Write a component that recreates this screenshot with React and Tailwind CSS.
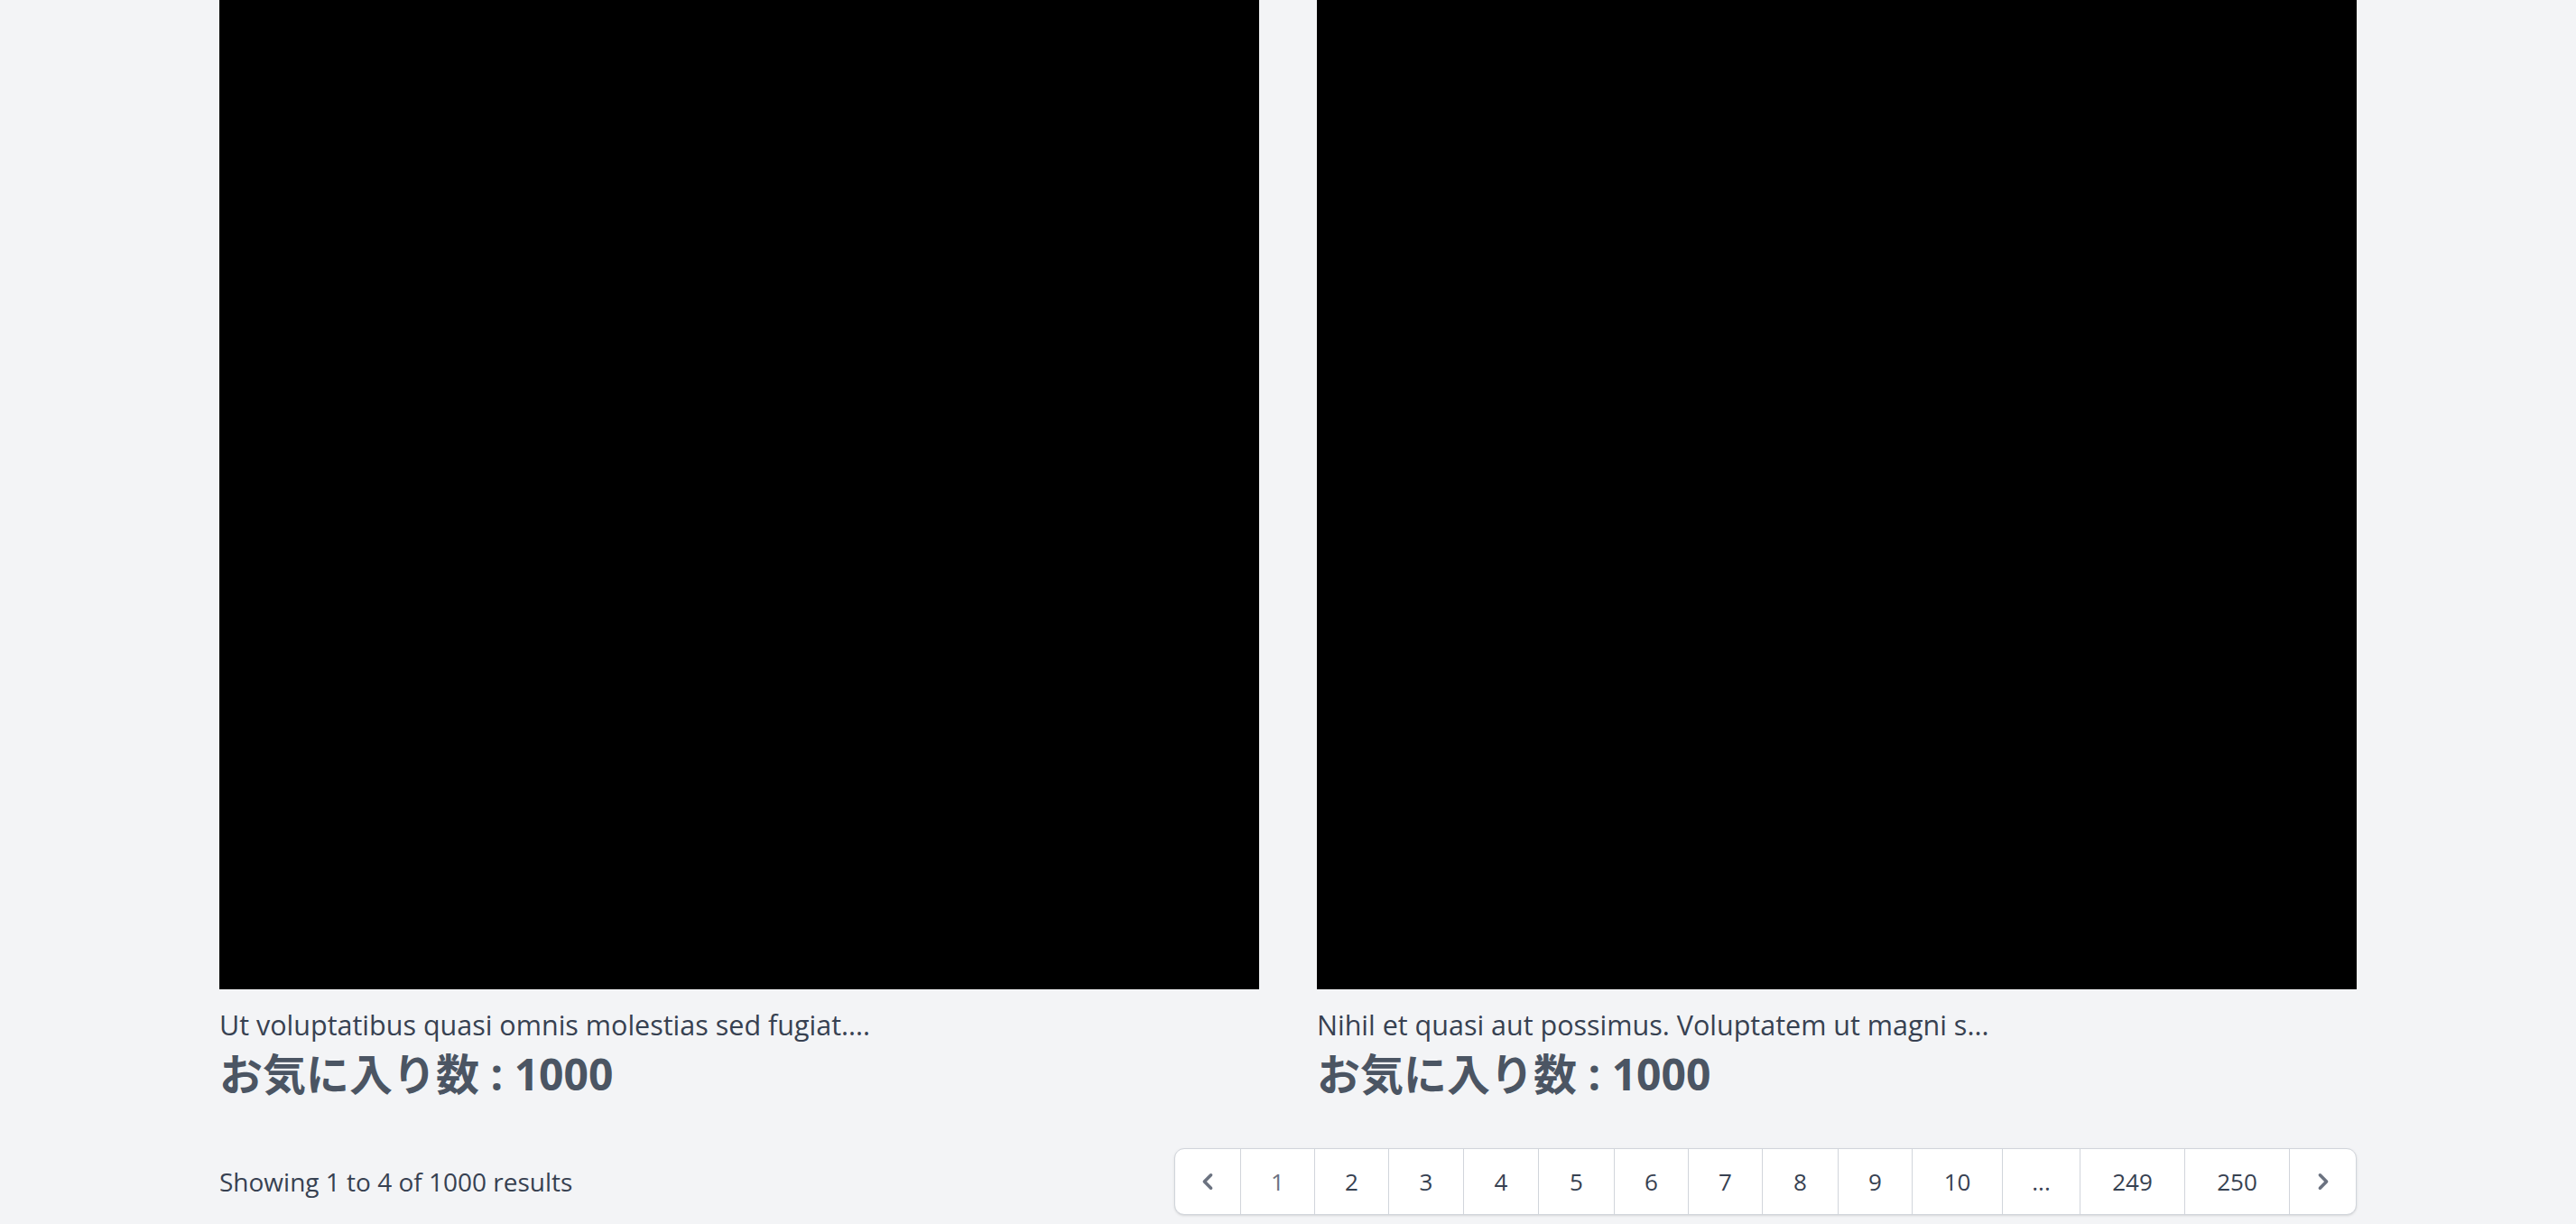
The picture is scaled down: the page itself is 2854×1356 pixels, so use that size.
import React from 'react';

const posts = [
  { id: 1, excerpt: 'Ut voluptatibus quasi omnis molestias sed fugiat....', favorites: 1000 },
  { id: 2, excerpt: 'Nihil et quasi aut possimus. Voluptatem ut magni s...', favorites: 1000 },
];

const pages = [
  { label: '1', w: 'w-[82px]', current: true },
  { label: '2', w: 'w-[82px]' },
  { label: '3', w: 'w-[83px]' },
  { label: '4', w: 'w-[83px]' },
  { label: '5', w: 'w-[84px]' },
  { label: '6', w: 'w-[82px]' },
  { label: '7', w: 'w-[82px]' },
  { label: '8', w: 'w-[84px]' },
  { label: '9', w: 'w-[82px]' },
  { label: '10', w: 'w-[100px]' },
  { label: '...', w: 'w-[86px]' },
  { label: '249', w: 'w-[116px]' },
  { label: '250', w: 'w-[116px]' },
];

function Chevron({ dir }) {
  return (
    <svg viewBox="0 0 20 20" fill="currentColor" className="w-[36px] h-[36px]">
      {dir === 'left' ? (
        <path fillRule="evenodd" d="M12.707 5.293a1 1 0 010 1.414L9.414 10l3.293 3.293a1 1 0 01-1.414 1.414l-4-4a1 1 0 010-1.414l4-4a1 1 0 011.414 0z" clipRule="evenodd" />
      ) : (
        <path fillRule="evenodd" d="M7.293 14.707a1 1 0 010-1.414L10.586 10 7.293 6.707a1 1 0 011.414-1.414l4 4a1 1 0 010 1.414l-4 4a1 1 0 01-1.414 0z" clipRule="evenodd" />
      )}
    </svg>
  );
}

function PostCard({ post }) {
  return (
    <div className="flex flex-col">
      <div className="h-[1096px] bg-black" />
      <p className="mt-[16px] text-[30.5px] leading-[46px] text-[#374151]">{post.excerpt}</p>
      <h3 className="text-[48px] leading-[64px] font-bold text-[#4b5563]">
        お気に入り数 : {post.favorites}
      </h3>
    </div>
  );
}

function Pagination() {
  return (
    <nav className="flex h-[74px] bg-white border border-[#d1d5db] rounded-[11px] shadow-sm overflow-hidden text-[26px] text-[#374151]">
      <span className="w-[73px] flex items-center justify-center text-[#6b7280] border-r border-[#d1d5db]">
        <Chevron dir="left" />
      </span>
      {pages.map((p) => (
        <span
          key={p.label}
          className={`${p.w} flex items-center justify-center border-r border-[#d1d5db] ${
            p.current ? 'text-[#6b7280]' : ''
          }`}
        >
          {p.label}
        </span>
      ))}
      <span className="w-[73px] flex items-center justify-center text-[#6b7280]">
        <Chevron dir="right" />
      </span>
    </nav>
  );
}

export default function App() {
  return (
    <div className="min-h-screen bg-[#f3f4f6] font-['Open_Sans','Noto_Sans_CJK_JP',sans-serif]">
      <div className="w-[2368px] mx-auto">
        <div className="grid grid-cols-2 gap-[64px]">
          {posts.map((post) => (
            <PostCard key={post.id} post={post} />
          ))}
        </div>
        <div className="mt-[50px] flex items-center justify-between">
          <p className="text-[28px] text-[#374151]">Showing 1 to 4 of 1000 results</p>
          <Pagination />
        </div>
      </div>
    </div>
  );
}
